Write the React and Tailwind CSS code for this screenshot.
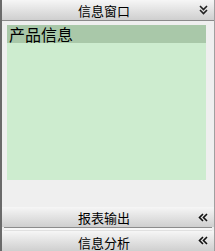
import React from 'react';

const font = { fontFamily: '"Noto Sans CJK SC", "DejaVu Sans", sans-serif' };

function DoubleDown() {
  return (
    <svg width="9" height="10" viewBox="0 0 9 10" className="shrink-0">
      <path d="M1 1 L4.5 4.5 L8 1 M1 5 L4.5 8.5 L8 5" stroke="#222" strokeWidth="1.6" fill="none" />
    </svg>
  );
}

function DoubleLeft() {
  return (
    <svg width="10" height="9" viewBox="0 0 10 9" className="shrink-0">
      <path d="M5 1 L1.5 4.5 L5 8 M9 1 L5.5 4.5 L9 8" stroke="#111" strokeWidth="1.6" fill="none" />
    </svg>
  );
}

function Bar({ title, children, className }) {
  return (
    <div className={`flex items-center h-[20px] bg-gradient-to-b from-[#f6f6f6] to-[#cfcfcf] ${className || ''}`}>
      <div className="flex-1 text-center text-[13px] leading-none text-black pl-[14px]">{title}</div>
      <div className="w-[22px] flex justify-center">{children}</div>
    </div>
  );
}

export default function App() {
  return (
    <div className="w-[215px] h-[251px] bg-[#ececec] flex overflow-hidden" style={font}>
      <div className="w-[2px] bg-[#6a6a6a]" />
      <div className="flex-1 flex flex-col border-r border-[#a0a0a0] bg-[#efefef]">
        <Bar title="信息窗口" className="border-b border-[#8a8a8a] h-[21px]">
          <DoubleDown />
        </Bar>
        <div className="flex-1 pt-[4px] pl-[5px] pr-[8px] flex flex-col">
          <div className="h-[155px] bg-[#cdeccf] flex flex-col">
            <div className="h-[18px] bg-[#a9c8a9] flex items-center pl-[2px] text-[16px] leading-none text-black">
              产品信息
            </div>
          </div>
        </div>
        <Bar title="报表输出">
          <DoubleLeft />
        </Bar>
        <div className="h-[4px] bg-[#f8f8f8] border-t border-[#8c8c8c] border-b border-b-[#e0e0e0] mx-[2px]" />
        <Bar title="信息分析" className="h-[17px] items-start pt-[5px]">
          <DoubleLeft />
        </Bar>
      </div>
    </div>
  );
}
